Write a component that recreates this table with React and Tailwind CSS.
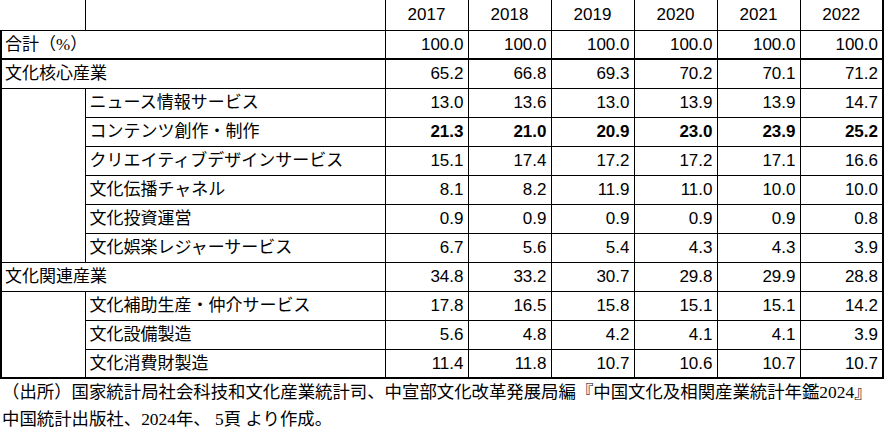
const years = ["2017", "2018", "2019", "2020", "2021", "2022"];

const groups = [
  {
    label: "合計（%）",
    values: ["100.0", "100.0", "100.0", "100.0", "100.0", "100.0"],
    thick: true,
    children: [],
  },
  {
    label: "文化核心産業",
    values: ["65.2", "66.8", "69.3", "70.2", "70.1", "71.2"],
    children: [
      { label: "ニュース情報サービス", values: ["13.0", "13.6", "13.0", "13.9", "13.9", "14.7"] },
      { label: "コンテンツ創作・制作", values: ["21.3", "21.0", "20.9", "23.0", "23.9", "25.2"], bold: true },
      { label: "クリエイティブデザインサービス", values: ["15.1", "17.4", "17.2", "17.2", "17.1", "16.6"] },
      { label: "文化伝播チャネル", values: ["8.1", "8.2", "11.9", "11.0", "10.0", "10.0"] },
      { label: "文化投資運営", values: ["0.9", "0.9", "0.9", "0.9", "0.9", "0.8"] },
      { label: "文化娯楽レジャーサービス", values: ["6.7", "5.6", "5.4", "4.3", "4.3", "3.9"] },
    ],
  },
  {
    label: "文化関連産業",
    values: ["34.8", "33.2", "30.7", "29.8", "29.9", "28.8"],
    children: [
      { label: "文化補助生産・仲介サービス", values: ["17.8", "16.5", "15.8", "15.1", "15.1", "14.2"] },
      { label: "文化設備製造", values: ["5.6", "4.8", "4.2", "4.1", "4.1", "3.9"] },
      { label: "文化消費財製造", values: ["11.4", "11.8", "10.7", "10.6", "10.7", "10.7"] },
    ],
  },
];

const jp = "font-['Liberation_Serif','Noto_Sans_CJK_JP',serif]";
const num = "font-['Liberation_Sans','Noto_Sans_CJK_JP',sans-serif]";

function Values({ values, bold, thick }) {
  return values.map((v, j) => (
    <td
      key={j}
      className={`border border-black text-right pr-[4px] text-[17px] ${num} ${bold ? "font-bold" : ""} ${thick ? "border-b-2" : ""}`}
    >
      {v}
    </td>
  ));
}

export default function App() {
  const body = [];
  groups.forEach((g, gi) => {
    body.push(
      <tr key={`g${gi}`} className="h-[29px]">
        <td
          colSpan={2}
          className={`border border-l-2 border-black pl-[3px] text-[17px] whitespace-nowrap ${jp} ${g.thick ? "border-b-2" : ""}`}
        >
          {g.label}
        </td>
        <Values values={g.values} thick={g.thick} />
      </tr>
    );
    g.children.forEach((c, ci) => (
      body.push(
        <tr key={`g${gi}c${ci}`} className="h-[29px]">
          {ci === 0 && (
            <td rowSpan={g.children.length} className="border border-l-2 border-black" />
          )}
          <td className={`border border-black pl-[4px] text-[17px] whitespace-nowrap ${jp}`}>
            {c.label}
          </td>
          <Values values={c.values} bold={c.bold} />
        </tr>
      )
    ));
  });

  return (
    <div className="w-[885px] h-[433px] bg-white text-black overflow-hidden">
      <table className="table-fixed border-collapse border-r-2 border-b-2 border-black">
        <colgroup>
          <col className="w-[84px]" />
          <col className="w-[300px]" />
          {years.map(y => <col key={y} className="w-[83px]" />)}
        </colgroup>
        <thead>
          <tr className="h-[30px]">
            <td className="border-r border-b border-black" />
            <td className="border-r border-b border-black" />
            {years.map(y => (
              <td key={y} className={`border border-t-0 border-black text-center text-[17px] ${num}`}>
                {y}
              </td>
            ))}
          </tr>
        </thead>
        <tbody>{body}</tbody>
      </table>
      <div className={`pl-[2px] text-[17.4px] leading-[27px] whitespace-nowrap ${jp}`}>
        <p>（出所）国家統計局社会科技和文化産業統計司、中宣部文化改革発展局編『中国文化及相関産業統計年鑑2024』</p>
        <p>中国統計出版社、2024年、 5頁 より作成。</p>
      </div>
    </div>
  );
}
